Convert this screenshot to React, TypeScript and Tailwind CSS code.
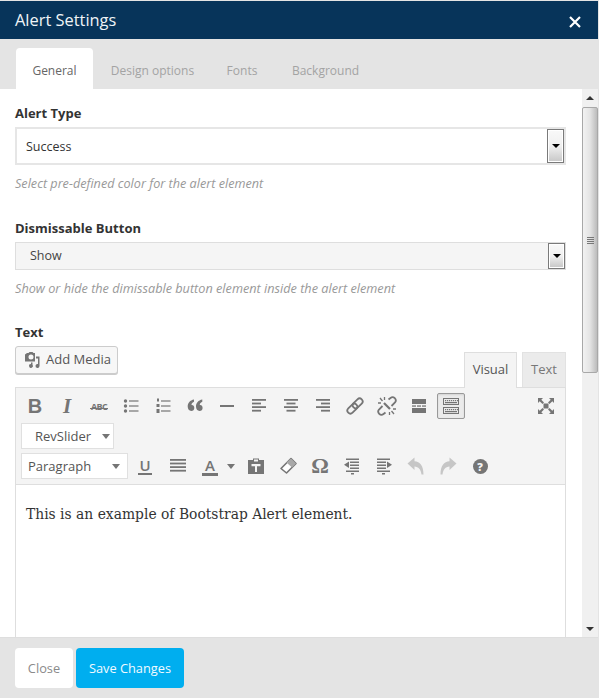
const gray = '#757575'

function Lines({ rows }: { rows: [number, number][] }) {
  return (
    <svg width="20" height="20" viewBox="0 0 20 20" fill={gray}>
      {rows.map(([x, w], i) => (
        <rect key={i} x={x} y={3 + i * 3.6} width={w} height="1.8" />
      ))}
    </svg>
  )
}

function Caret() {
  return <span className="h-0 w-0 border-x-[4px] border-t-[5px] border-x-transparent border-t-[#757575]" />
}

function SelectArrow() {
  return (
    <span className="flex h-full w-[17px] items-center justify-center border-2 border-[#7a7a7a] bg-gradient-to-b from-[#f8f8f8] via-[#f0f0f0] to-[#c9c9c9] outline outline-1 -outline-offset-2 outline-white">
      <span className="h-0 w-0 border-x-[4px] border-t-[4px] border-x-transparent border-t-black" />
    </span>
  )
}

function TB({ children, className = 'w-[32px]' }: { children: React.ReactNode; className?: string }) {
  return <span className={`flex h-[28px] shrink-0 items-center justify-center ${className}`}>{children}</span>
}

function KeyRow({ y }: { y: number }) {
  return (
    <>
      {[0, 1, 2, 3, 4, 5, 6].map((i) => (
        <rect key={i} x={4 + i * 2} y={y} width="1.2" height="1.2" />
      ))}
    </>
  )
}

const sans = "font-['Open_Sans',sans-serif]"

function Toolbar() {
  return (
    <div className="border-b border-[#dedede] bg-[#f4f4f4] pl-[3px] pr-[4px] pt-[4px]">
      {/* row 1 */}
      <div className="flex h-[28px] items-center">
        <TB><span className="font-['Liberation_Sans',sans-serif] text-[20px] font-bold leading-none text-[#757575]">B</span></TB>
        <TB><span className="font-['Liberation_Serif',serif] text-[21px] font-bold italic leading-none text-[#757575]">I</span></TB>
        <TB>
          <span className="relative text-[9px] font-bold leading-none tracking-[-0.6px] text-[#757575]">
            ABC
            <span className="absolute left-[-1px] right-[-1px] top-[6px] h-px bg-[#757575]" />
          </span>
        </TB>
        <TB>
          <svg width="20" height="20" viewBox="0 0 20 20" fill={gray}>
            <circle cx="4.500" cy="5" r="1.700" /><circle cx="4.500" cy="10" r="1.700" /><circle cx="4.500" cy="15" r="1.700" />
            <rect x="8" y="4.400" width="9.500" height="1.200" /><rect x="8" y="9.400" width="9.500" height="1.200" /><rect x="8" y="14.400" width="9.500" height="1.200" />
          </svg>
        </TB>
        <TB>
          <svg width="20" height="20" viewBox="0 0 20 20" fill={gray}>
            <rect x="4" y="2.500" width="2" height="3" /><rect x="3.500" y="8" width="3" height="3" /><rect x="3.500" y="13" width="3" height="4" />
            <rect x="8" y="4.400" width="9.500" height="1.200" /><rect x="8" y="9.400" width="9.500" height="1.200" /><rect x="8" y="14.400" width="9.500" height="1.200" />
          </svg>
        </TB>
        <TB>
          <svg width="20" height="20" viewBox="0 0 20 20" fill={gray}>
            <path d="M9 3.500v2.300C7 6.500 6.500 7.800 6.500 9c1.700-.2 2.800 1.100 2.800 2.900 0 1.900-1.300 3-3 3-2.200 0-3.600-1.800-3.600-4.400C2.700 6.900 5 4.200 9 3.500z" />
            <path d="M17.300 3.500v2.300c-2 .7-2.500 2-2.500 3.200 1.700-.2 2.800 1.100 2.800 2.900 0 1.900-1.300 3-3 3-2.200 0-3.600-1.800-3.600-4.400 0-3.600 2.300-6.300 6.300-7z" />
          </svg>
        </TB>
        <TB>
          <svg width="20" height="20" viewBox="0 0 20 20" fill={gray}><rect x="3" y="9" width="14" height="2" /></svg>
        </TB>
        <TB><Lines rows={[[3, 14], [3, 9], [3, 14], [3, 9]]} /></TB>
        <TB><Lines rows={[[3, 14], [5.500, 9], [3, 14], [5.500, 9]]} /></TB>
        <TB><Lines rows={[[3, 14], [8, 9], [3, 14], [8, 9]]} /></TB>
        <TB>
          <svg width="20" height="20" viewBox="0 0 20 20" fill="none" stroke={gray} strokeWidth="1.800">
            <g transform="rotate(-45 10 10)">
              <rect x="0.500" y="7" width="11.500" height="6" rx="3" />
              <rect x="8" y="7" width="11.500" height="6" rx="3" />
            </g>
          </svg>
        </TB>
        <TB>
          <svg width="20" height="20" viewBox="0 0 20 20" fill="none" stroke={gray} strokeWidth="1.800">
            <path d="M8.500 16.500 6.500 18a3.200 3.200 0 0 1-4.500-4.500l3.500-3.500M11.500 3.500l2-1.500a3.200 3.200 0 0 1 4.500 4.500L14.500 10" />
            <path d="M7 7l6 6" strokeWidth="2.200" />
            <path d="M3 2l2.500 3M7.500 1v3M1 7h3M17 18l-2.500-3M12.500 19v-3M19 13h-3" strokeWidth="1.300" />
          </svg>
        </TB>
        <TB>
          <svg width="20" height="20" viewBox="0 0 20 20" fill={gray}>
            <rect x="3" y="3" width="14" height="5" />
            <rect x="3" y="9.400" width="4" height="1.300" /><rect x="8" y="9.400" width="4" height="1.300" /><rect x="13" y="9.400" width="4" height="1.300" />
            <rect x="3" y="12" width="14" height="5" />
          </svg>
        </TB>
        <span className="ml-[2px] flex h-[26px] w-[28px] items-center justify-center rounded-[2px] border border-[#999] bg-[#ebebeb] shadow-[inset_0_1px_2px_rgba(0,0,0,0.1)]">
          <svg width="20" height="20" viewBox="0 0 20 20" fill={gray}>
            <path fillRule="evenodd" d="M2 2h16v7H2zM3 3v5h14V3zM2 11h16v7H2zM3 12v5h14v-5z" />
            <KeyRow y={4} />
            <rect x="4" y="6" width="12" height="1.200" />
            <KeyRow y={13} />
            <rect x="4" y="15" width="12" height="1.200" />
          </svg>
        </span>
        <div className="ml-auto">
          <TB className="w-[30px]">
            <svg width="20" height="20" viewBox="0 0 20 20" fill={gray}>
              <rect x="7.500" y="7.500" width="5" height="5" />
              <path d="M2 2h5L5.300 3.700 8 6.500 6.500 8 3.700 5.300 2 7zM18 2v5l-1.700-1.700L13.500 8 12 6.500l2.700-2.800L13 2zM2 18v-5l1.700 1.700L6.500 12 8 13.500l-2.700 2.800L7 18zM18 18h-5l1.700-1.700L12 13.500l1.500-1.500 2.800 2.700L18 13z" />
            </svg>
          </TB>
        </div>
      </div>
      {/* row 2 */}
      <div className="ml-[2px] mt-[3px] flex h-[26px] w-[93px] items-center border border-[#e0e0e0] bg-white pl-[13px] text-[13px] text-[#555]">
        <span className="pt-[1px]">RevSlider</span>
        <span className="ml-[11px] flex"><Caret /></span>
      </div>
      {/* row 3 */}
      <div className="ml-[2px] mt-[4px] flex h-[31px] items-start">
        <div className="flex h-[26px] w-[107px] shrink-0 items-center justify-between border border-[#e0e0e0] bg-white pl-[6px] pr-[7px] text-[13px] text-[#555]">
          <span className="pt-[1px]">Paragraph</span>
          <Caret />
        </div>
        <div className="-mt-px ml-[1px] flex items-center">
          <TB className="w-[32px]">
            <span className="border-b-2 border-[#757575] px-px text-[15px] font-semibold leading-[15px] text-[#757575]">U</span>
          </TB>
          <TB className="ml-px w-[32px]"><Lines rows={[[2, 16], [2, 16], [2, 16], [2, 16]]} /></TB>
          <TB className="w-[32px]">
            <span className="border-b-[3px] border-[#757575] px-[3px] text-[15px] font-semibold leading-[16px] text-[#757575]">A</span>
          </TB>
          <TB className="w-[10px]"><Caret /></TB>
          <TB className="w-[36px]">
            <svg width="20" height="20" viewBox="0 0 20 20" fill={gray} className="ml-[4px]">
              <path fillRule="evenodd" d="M2 4h5V2.500h6V4h5v14H2zM8 3.500v2h4v-2zM5.500 8v2.200H9V16h2v-5.800h3.500V8z" />
            </svg>
          </TB>
          <TB>
            <svg width="20" height="20" viewBox="0 0 20 20">
              <path d="M13 2.500 18 7.500 8.500 17 3 12.500z" fill="#ffffff" stroke={gray} strokeWidth="1.600" strokeLinejoin="round" />
              <path d="M13 2.500 18 7.500 14 11.500 8.500 6.500z" fill="#a8a8a8" />
            </svg>
          </TB>
          <TB><span className="font-['Liberation_Serif',serif] text-[22px] font-bold leading-none text-[#757575]">Ω</span></TB>
          <TB>
            <svg width="20" height="20" viewBox="0 0 20 20" fill={gray}>
              <path d="M2 8.800 7 5.500v6.500z" />
              <rect x="4" y="2.500" width="13" height="1.500" /><rect x="8" y="5.500" width="9" height="1.500" /><rect x="8" y="8.500" width="9" height="1.500" /><rect x="8" y="11.500" width="9" height="1.500" /><rect x="4" y="14.500" width="13" height="1.500" /><rect x="9" y="17" width="3" height="1.500" />
            </svg>
          </TB>
          <TB>
            <svg width="20" height="20" viewBox="0 0 20 20" fill={gray}>
              <path d="M18 8.800 13 5.500v6.500z" />
              <rect x="3" y="2.500" width="13" height="1.500" /><rect x="3" y="5.500" width="9" height="1.500" /><rect x="3" y="8.500" width="9" height="1.500" /><rect x="3" y="11.500" width="9" height="1.500" /><rect x="3" y="14.500" width="13" height="1.500" /><rect x="8" y="17" width="3" height="1.500" />
            </svg>
          </TB>
          <TB>
            <svg width="20" height="20" viewBox="0 0 20 20" fill="#c6c6c6">
              <path d="M1.500 7.500 8.500 1.500v3.800c5.500.3 9 4.700 9 13.200h-2c-.6-5-3-7.800-7-8v3.500z" />
            </svg>
          </TB>
          <TB>
            <svg width="20" height="20" viewBox="0 0 20 20" fill="#c6c6c6">
              <path d="M18.500 7.500 11.500 1.500v3.800c-5.500.3-9 4.700-9 13.200h2c.6-5 3-7.800 7-8v3.500z" />
            </svg>
          </TB>
          <TB>
            <span className="flex h-[15px] w-[15px] items-center justify-center rounded-full bg-[#757575] text-[11px] font-extrabold leading-none text-[#f4f4f4]">?</span>
          </TB>
        </div>
      </div>
    </div>
  )
}

function Scrollbar() {
  return (
    <div className="flex w-[16px] shrink-0 flex-col bg-[#f0f0f0]">
      <div className="flex h-[18px] shrink-0 items-center justify-center">
        <span className="h-0 w-0 border-x-[4px] border-b-[4px] border-x-transparent border-b-[#333]" />
      </div>
      <div className="flex h-[266px] shrink-0 items-center justify-center rounded-[2px] border border-[#a8a8a8] bg-gradient-to-r from-[#f2f2f2] via-[#e4e4e4] to-[#bcbcbc]">
        <span className="flex w-[7px] flex-col gap-px">
          <span className="h-px bg-[#777]" /><span className="h-px bg-[#777]" /><span className="h-px bg-[#777]" /><span className="h-px bg-[#777]" />
        </span>
      </div>
      <div className="flex-1" />
      <div className="flex h-[17px] shrink-0 items-center justify-center">
        <span className="h-0 w-0 border-x-[4px] border-t-[4px] border-x-transparent border-t-[#333]" />
      </div>
    </div>
  )
}

export default function App() {
  return (
    <div className={`flex h-[698px] w-[599px] flex-col overflow-hidden border-r border-t border-[#e4e4e4] bg-white ${sans}`}>
      <div className="flex h-[38px] shrink-0 items-center justify-between bg-[#07345a] pl-[15px] pr-[17px]">
        <h1 className="text-[16.4px] leading-none text-[#f0f4f7]">Alert Settings</h1>
        <svg width="12" height="12" viewBox="0 0 12 12" stroke="#fff" strokeWidth="2.200" className="mt-[3px]">
          <path d="M1 1l10 10M11 1 1 11" />
        </svg>
      </div>

      <div className="flex h-[50px] shrink-0 items-end bg-[#e4e4e4] pl-[16px] text-[12px] text-[#a3a3a3]">
        <span className="flex h-[41px] w-[77px] items-center justify-center rounded-t-[4px] bg-white pt-[4px] text-[#666]">General</span>
        <span className="flex h-[41px] w-[119px] items-center justify-center pt-[4px]">Design options</span>
        <span className="flex h-[41px] w-[60px] items-center justify-center pt-[4px]">Fonts</span>
        <span className="flex h-[41px] w-[107px] items-center justify-center pt-[4px]">Background</span>
      </div>

      <div className="flex min-h-0 flex-1">
        <div className="min-w-0 flex-1 overflow-hidden pl-[15px] pr-[16px] pt-[15px]">
          <label className="block text-[13px] font-bold leading-[18px] text-[#333]">Alert Type</label>
          <div className="mt-[5px] flex h-[38px] items-center justify-between border-2 border-[#e6e6e6] bg-white pl-[9px] text-[12.5px] text-[#333]">
            <span className="pt-[3px]">Success</span>
            <SelectArrow />
          </div>
          <p className="mt-[9px] text-[12.65px] italic leading-[18px] text-[#999]">Select pre-defined color for the alert element</p>

          <label className="mt-[27px] block text-[13px] font-bold leading-[18px] text-[#333]">Dismissable Button</label>
          <div className="mt-[5px] flex h-[28px] items-center justify-between border border-[#dedede] bg-[#f5f5f5] pl-[14px] text-[12.5px] text-[#444]">
            <span className="pt-[1px]">Show</span>
            <SelectArrow />
          </div>
          <p className="mt-[9px] text-[12.7px] italic leading-[18px] text-[#999]">Show or hide the dimissable button element inside the alert element</p>

          <label className="mt-[26px] block text-[13px] font-bold leading-[18px] text-[#333]">Text</label>
          <div className="flex items-end justify-between">
            <button className="mb-[13px] mt-[5px] flex h-[28px] w-[103px] items-center rounded-[3px] border border-[#cccccc] bg-[#f7f7f7] pl-[7px] text-[13px] text-[#555] shadow-[0_1px_0_#ccc]">
              <svg width="18" height="18" viewBox="0 0 18 18" fill={gray} className="mr-[5px]">
                <path fillRule="evenodd" d="M4 2h1.500L6.500 1h3l1 1H12v8.500H2V3.500zM8 3.500a2.500 2.500 0 1 0 0 5 2.500 2.500 0 0 0 0-5z" />
                <path d="M13 5.500h3.500v9.500a2 2 0 1 1-1.500-2V7.500h-2zM9.500 11.500v2.300a1.900 1.900 0 1 1-1.500-.8v-1.500z" />
              </svg>
              Add Media
            </button>
            <div className="flex items-end">
              <span className="relative z-10 -mb-px flex h-[36px] w-[53px] items-center justify-center border border-b-0 border-[#dedede] bg-[#f4f4f4] pb-[2px] text-[13px] text-[#555]">Visual</span>
              <span className="ml-[5px] flex h-[35px] w-[44px] items-center justify-center border border-b-0 border-[#e2e2e2] bg-[#ebebeb] text-[13px] text-[#777]">Text</span>
            </div>
          </div>
          <div className="h-[260px] border border-[#dedede] bg-white">
            <Toolbar />
            <p className="px-[10px] pt-[19px] font-['DejaVu_Serif',serif] text-[13.87px] leading-[20px] text-[#333]">This is an example of Bootstrap Alert element.</p>
          </div>
        </div>
        <Scrollbar />
      </div>

      <div className="flex h-[61px] shrink-0 items-start gap-[3px] border-t border-[#dedede] bg-[#e4e4e4] pl-[15px] pt-[10px] text-[12.8px]">
        <button className="h-[40px] w-[58px] rounded-[4px] bg-white pt-[1px] text-[#8a8a8a]">Close</button>
        <button className="h-[40px] w-[108px] rounded-[4px] bg-[#00aeef] pt-[1px] text-[#f2faff]">Save Changes</button>
      </div>
    </div>
  )
}
